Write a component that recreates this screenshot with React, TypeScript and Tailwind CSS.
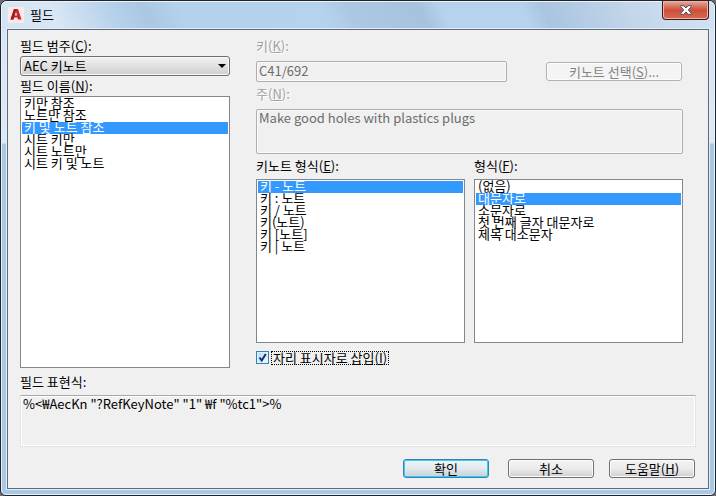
import { ReactNode, SelectHTMLAttributes } from "react";

const listClass =
  "block w-full appearance-none overflow-hidden border border-[#828790] bg-white py-px px-px text-[13px] leading-3 text-black outline-none";
const optionClass =
  "flex h-3 min-h-0 items-center overflow-visible whitespace-pre px-0.5 pt-0 pb-[3px] leading-3 checked:bg-linear-to-b checked:from-[#3399ff] checked:to-[#3399ff] checked:[-webkit-text-fill-color:#fff]";
const buttonClass =
  "h-[19px] rounded-[3px] border border-[#707070] bg-linear-to-b from-[#f3f3f3] from-0% via-[#ebebeb] via-50% to-[#cfcfcf] p-0 text-center text-[13px] leading-4 text-black shadow-[inset_0_0_0_1px_#fcfcfc]";

function FieldLabel({ htmlFor, hotkey, muted, children }: { htmlFor: string; hotkey?: string; muted?: boolean; children: ReactNode }) {
  return (
    <label
      htmlFor={htmlFor}
      className={muted ? "block h-4 leading-4 text-[#a0a0a0] [text-shadow:1px_1px_0_#fff]" : "block h-4 leading-4 text-black"}
    >
      {children}
      {hotkey ? (
        <>
          (<u>{hotkey}</u>)
        </>
      ) : null}
      :
    </label>
  );
}

function ListBox({ items, className, ...rest }: { items: string[] } & SelectHTMLAttributes<HTMLSelectElement>) {
  return (
    <select {...rest} size={items.length} className={`${listClass} ${className}`}>
      {items.map((item) => (
        <option key={item} value={item} className={optionClass}>
          {item}
        </option>
      ))}
    </select>
  );
}

function AppIcon() {
  return (
    <svg viewBox="0 0 16 16" className="size-4" aria-hidden="true">
      <rect width="16" height="16" fill="#fbe9e6" />
      <path d="M6 2h4L13.500 12.500H10l-.6-2H6.400l-1 2H2.500z" fill="#c1272d" />
      <path d="M6 2h2L5.400 12.500H2.500z" fill="#9e1b22" />
      <path d="M8 4.800 6.900 8.500h2.200z" fill="#fbe9e6" />
    </svg>
  );
}

export default function App() {
  return (
    <div className="bg-[#6d6d72] font-['Noto_Sans_CJK_KR',sans-serif] text-[13px] leading-4">
      <div className="rounded-t-[7px] rounded-b-[6px] border border-[#22242c] bg-linear-to-b from-[#d5e4f4] from-0% via-[#dce9f6] via-[142px] to-[#a9c8e6] to-[143px]">
        <div className="rounded-t-[6px] rounded-b-[5px] border border-[#e8f3fc] px-[5px] pb-[5px]">
          <header className="-mx-[5px] flex h-[27px] items-start justify-between rounded-t-[5px] bg-[linear-gradient(65deg,#d3e3f3_0%,#d9e7f4_8%,#b3cfea_17%,#abc7e2_21%,#b5d2ed_26%,#b6d3ee_45%,#adc8e3_49%,#a7c2dd_59%,#b6d2ed_62%,#b6d2ed_73%,#a9c5e0_76%,#c3d6ea_88%,#d3e3f3_100%)] pl-[6px]">
            <div className="mt-[5px] flex h-4 items-center gap-[6px]">
              <AppIcon />
              <h1 className="leading-4 text-black">필드</h1>
            </div>
            <button
              type="button"
              aria-label="닫기"
              className="mr-[5px] -mt-px flex h-[19px] w-[47px] items-center justify-center rounded-b-[4px] border border-t-0 border-[#43161b] bg-linear-to-b from-[#e8a99c] from-0% via-[#cc4f3a] via-50% to-[#d9694f] shadow-[inset_0_0_0_1px_#eeb5a7]"
            >
              <svg viewBox="0 0 12 10" className="h-[10px] w-3" aria-hidden="true">
                <path
                  d="M.7.7h3.1L6 3 8.200.7h3.100v1L8.300 5l3 3.300v1H8.200L6 7 3.800 9.300H.7v-1L3.700 5l-3-3.300z"
                  fill="#fff"
                  stroke="#4a4f66"
                  strokeWidth="1"
                />
              </svg>
            </button>
          </header>

          <main className="border border-[#5c6b7a] bg-[#f0f0f0] px-3 pt-2 pb-[10px] shadow-[0_0_0_1px_#e3eef8]">
            <div className="flex gap-[26px]">
              <section className="flex w-[210px] flex-col gap-0.5">
                <FieldLabel htmlFor="category" hotkey="C">필드 범주</FieldLabel>
                <div className="grid items-center">
                  <select
                    id="category"
                    className="col-start-1 row-start-1 h-5 w-full appearance-none rounded-[3px] border border-[#707070] bg-linear-to-b from-[#f2f2f2] to-[#cfcfcf] py-0 pr-5 pl-[3px] text-[13px] leading-4 text-black shadow-[inset_0_0_0_1px_#f8f8f8]"
                  >
                    <option>AEC 키노트</option>
                  </select>
                  <svg viewBox="0 0 8 4" className="pointer-events-none col-start-1 row-start-1 mr-1 h-1 w-2 justify-self-end" aria-hidden="true">
                    <path d="M0 0h8L4 4z" fill="#000" />
                  </svg>
                </div>
                <FieldLabel htmlFor="names" hotkey="N">필드 이름</FieldLabel>
                <ListBox
                  id="names"
                  className="h-[272px]"
                  defaultValue="키 및 노트 참조"
                  items={["키만 참조", "노트만 참조", "키 및 노트 참조", "시트 키만", "시트 노트만", "시트 키 및 노트"]}
                />
              </section>

              <section className="mr-[13px] flex-1">
                <FieldLabel htmlFor="key" hotkey="K" muted>키</FieldLabel>
                <div className="mt-[7px] flex items-center justify-between">
                  <input
                    id="key"
                    disabled
                    defaultValue="C41/692"
                    className="h-[21px] w-[251px] rounded-[2px] border border-[#afafaf] bg-[#f0f0f0] px-0.5 pt-0 pb-[3px] text-[13px] leading-4 text-[#6d6d6d] shadow-[inset_0_0_0_1px_#fafafa]"
                  />
                  <button
                    type="button"
                    disabled
                    className="mr-px h-[19px] w-[136px] rounded-[3px] border border-[#adb2b5] bg-[#f4f4f4] p-0 text-[13px] leading-4 text-[#838383] shadow-[inset_0_0_0_1px_#fcfcfc]"
                  >
                    키노트 선택(<u>S</u>)...
                  </button>
                </div>
                <div className="mt-1">
                  <FieldLabel htmlFor="note" hotkey="N" muted>주</FieldLabel>
                </div>
                <textarea
                  id="note"
                  disabled
                  defaultValue="Make good holes with plastics plugs"
                  className="mt-[7px] block h-[45px] w-full resize-none rounded-[2px] border border-[#afafaf] bg-[#f0f0f0] px-0.5 py-0 text-[13px] leading-4 text-[#6d6d6d] shadow-[inset_0_0_0_1px_#fafafa]"
                />
                <div className="mt-1 grid grid-cols-2 gap-[9px]">
                  <div>
                    <FieldLabel htmlFor="noteFormat" hotkey="E">키노트 형식</FieldLabel>
                    <ListBox
                      id="noteFormat"
                      className="mt-[5px] h-[164px]"
                      defaultValue="키 - 노트"
                      items={["키 - 노트", "키 : 노트", "키 / 노트", "키(노트)", "키 [노트]", "키 | 노트"]}
                    />
                  </div>
                  <div>
                    <FieldLabel htmlFor="format" hotkey="F">형식</FieldLabel>
                    <ListBox
                      id="format"
                      className="mt-[5px] h-[164px]"
                      defaultValue="대문자로"
                      items={["(없음)", "대문자로", "소문자로", "첫 번째 글자 대문자로", "제목 대소문자"]}
                    />
                  </div>
                </div>
                <div className="mt-2 flex items-start gap-0.5">
                  <div className="grid size-[13px]">
                    <input
                      id="placeholder"
                      type="checkbox"
                      defaultChecked
                      className="col-start-1 row-start-1 size-[13px] appearance-none border border-[#3c7fb1] bg-linear-to-br from-[#b5dcf2] to-[#f2fafe] shadow-[inset_0_0_0_1px_#def3fc]"
                    />
                    <svg viewBox="0 0 13 13" className="pointer-events-none col-start-1 row-start-1 size-[13px]" aria-hidden="true">
                      <path d="M3.500 6.500 5.700 9.500 9.800 3" fill="none" stroke="#12307a" strokeWidth="2" />
                    </svg>
                  </div>
                  <label htmlFor="placeholder" className="h-[14px] border border-dotted border-black px-px leading-3">
                    자리 표시자로 삽입(<u>I</u>)
                  </label>
                </div>
              </section>
            </div>

            <div className="mt-1.5">
              <FieldLabel htmlFor="expression">필드 표현식</FieldLabel>
              <textarea
                id="expression"
                readOnly
                defaultValue={'%<₩AecKn "?RefKeyNote" "1" ₩f "%tc1">%'}
                className="mt-[5px] block h-[52px] w-full resize-none border border-t-[#a8a8a8] border-r-[#e2e3ea] border-b-[#e2e3ea] border-l-[#e2e3ea] bg-[#f0f0f0] px-0.5 py-0 text-[13px] leading-4 text-black shadow-[inset_0_0_0_1px_#fff] outline-none"
              />
            </div>

            <div className="mt-3 flex justify-end">
              <button
                type="button"
                className="mr-[19px] h-[19px] w-[86px] rounded-[3px] border border-[#3c7fb1] bg-linear-to-b from-[#f0f4f6] from-0% via-[#e2e9ed] via-50% to-[#c5d0d7] p-0 text-[13px] leading-4 text-black shadow-[inset_0_0_0_1px_#30cdf5]"
              >
                확인
              </button>
              <button type="button" className={`${buttonClass} mr-[15px] w-[86px]`}>
                취소
              </button>
              <button type="button" className={`${buttonClass} mr-px w-[86px]`}>
                도움말(<u>H</u>)
              </button>
            </div>
          </main>
        </div>
      </div>
    </div>
  );
}
